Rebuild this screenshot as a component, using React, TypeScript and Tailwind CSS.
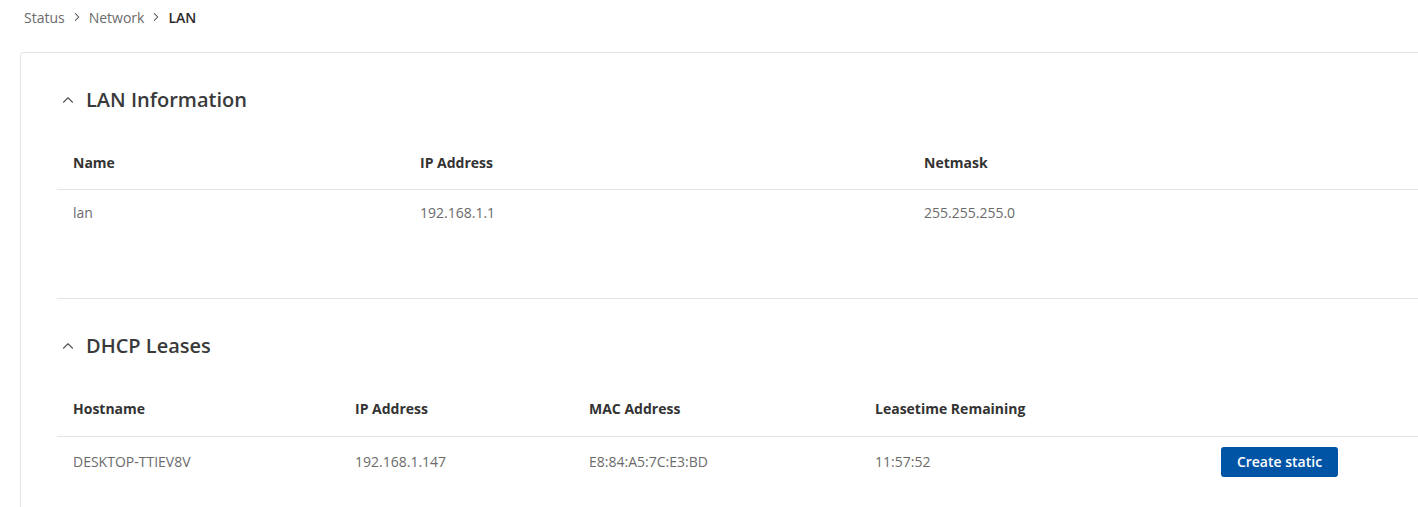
import { ChevronRight, ChevronUp } from "lucide-react";

const font = { fontFamily: '"Open Sans", "Noto Sans", sans-serif' };

const leases = [
  { host: "DESKTOP-TTIEV8V", ip: "192.168.1.147", mac: "E8:84:A5:7C:E3:BD", left: "11:57:52" },
];

function SectionTitle({ title }: { title: string }) {
  return (
    <div className="flex h-[28px] items-center gap-[9px] pl-[2px]">
      <ChevronUp className="h-[18px] w-[18px] text-[#555]" strokeWidth={1.5} />
      <h2 className="text-[20px] font-semibold text-[#3a3a3a]">{title}</h2>
    </div>
  );
}

export default function App() {
  return (
    <div className="h-[507px] w-[1418px] overflow-hidden bg-white" style={font}>
      <nav className="flex h-[34px] items-center gap-[5px] pl-[24px] text-[14px] text-[#6b6b6b]">
        <span>Status</span>
        <ChevronRight className="h-[14px] w-[14px] text-[#444]" strokeWidth={1.8} />
        <span>Network</span>
        <ChevronRight className="h-[14px] w-[14px] text-[#444]" strokeWidth={1.8} />
        <span className="font-semibold text-[#2b2b2b]">LAN</span>
      </nav>

      <div className="ml-[20px] mt-[18px] w-[1460px] rounded-tl-[4px] border-l border-t border-[#e3e3e3]">
        <section className="ml-[36px] pb-[63px] pt-[33px]">
          <SectionTitle title="LAN Information" />
          <div className="mt-[22px] text-[14px]">
            <div className="grid h-[54px] grid-cols-[347px_504px_1fr] items-center border-b border-[#e1e3ea] font-bold text-[#333]">
              <div className="px-4">Name</div>
              <div className="px-4">IP Address</div>
              <div className="px-4">Netmask</div>
            </div>
            <div className="grid h-[45px] grid-cols-[347px_504px_1fr] items-center text-[#6b6b6b]">
              <div className="px-4">lan</div>
              <div className="px-4">192.168.1.1</div>
              <div className="px-4">255.255.255.0</div>
            </div>
          </div>
        </section>

        <section className="ml-[36px] border-t border-[#e1e3ea] pb-6 pt-[33px]">
          <SectionTitle title="DHCP Leases" />
          <div className="mt-[21px] text-[14px]">
            <div className="grid h-[56px] grid-cols-[282px_234px_286px_346px_1fr] items-center border-b border-[#e1e3ea] font-bold text-[#333]">
              <div className="px-4">Hostname</div>
              <div className="px-4">IP Address</div>
              <div className="px-4">MAC Address</div>
              <div className="px-4">Leasetime Remaining</div>
              <div className="px-4" />
            </div>
            {leases.map(lease => (
              <div
                key={lease.mac}
                className="grid h-[49px] grid-cols-[282px_234px_286px_346px_1fr] items-center text-[#6b6b6b]"
              >
                <div className="px-4">{lease.host}</div>
                <div className="px-4">{lease.ip}</div>
                <div className="px-4">{lease.mac}</div>
                <div className="px-4">{lease.left}</div>
                <div className="px-4">
                  <button className="h-[30px] w-[117px] rounded-[3px] bg-[#0054a6] text-[14px] font-semibold text-white">
                    Create static
                  </button>
                </div>
              </div>
            ))}
          </div>
        </section>
      </div>
    </div>
  );
}
